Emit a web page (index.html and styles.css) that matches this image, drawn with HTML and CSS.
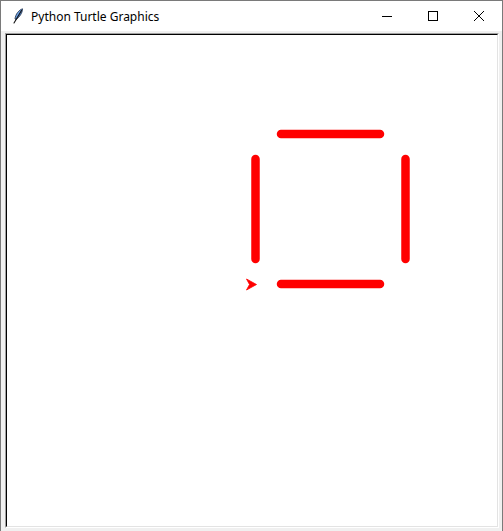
FILE: index.html
```html
<!DOCTYPE html>
<html lang="en">
<head>
  <meta charset="UTF-8">
  <meta name="viewport" content="width=device-width, initial-scale=1.0">
  <title>Python Turtle Graphics</title>
  <link rel="stylesheet" href="styles.css">
</head>
<body>

  <div class="window">
    <div class="titlebar">
      <svg class="app-icon" width="12" height="16" viewBox="0 0 12 16">
        <defs>
          <linearGradient id="feather" x1="0" y1="0" x2="1" y2="1">
            <stop offset="0" stop-color="#9cc8f4"/>
            <stop offset="1" stop-color="#2a68c8"/>
          </linearGradient>
        </defs>
        <path d="M10.5 0.8 C7 2 3.5 6 3 11 L4.2 11.6 C7.5 9 10.5 5 10.5 0.8 Z" fill="url(#feather)" stroke="#1b2a44" stroke-width="0.8"/>
        <path d="M9.5 2.5 L2 15" stroke="#111" stroke-width="1.1" stroke-linecap="round"/>
      </svg>
      <span class="title">Python Turtle Graphics</span>
      <div class="controls">
        <div class="ctl">
          <svg width="10" height="10" viewBox="0 0 10 10"><path d="M0 5.5 H10" stroke="#000" stroke-width="1"/></svg>
        </div>
        <div class="ctl">
          <svg width="10" height="10" viewBox="0 0 10 10"><rect x="0.5" y="0.5" width="9" height="9" fill="none" stroke="#000" stroke-width="1"/></svg>
        </div>
        <div class="ctl">
          <svg width="10" height="10" viewBox="0 0 10 10"><path d="M0 0 L10 10 M10 0 L0 10" stroke="#000" stroke-width="1"/></svg>
        </div>
      </div>
    </div>

    <div class="client">
      <div class="frame">
        <div class="canvas">
          <!-- turtle drawing, page coordinates -->
          <svg class="drawing" width="490" height="491" viewBox="7 35 490 491">
            <g stroke="#ff0000" stroke-width="8.5" stroke-linecap="round" fill="none">
              <line x1="281" y1="134" x2="380" y2="134"/>
              <line x1="255.5" y1="159" x2="255.5" y2="259"/>
              <line x1="405.5" y1="159" x2="405.5" y2="259"/>
              <line x1="281" y1="284" x2="380" y2="284"/>
            </g>
            <polygon points="256.5,284.5 246.5,279 249.5,284.5 246.5,290" fill="#ff0000" stroke="#ff0000" stroke-width="0.8"/>
          </svg>
        </div>
      </div>
    </div>
  </div>

</body>
</html>
```

FILE: styles.css
```css
html, body {
  margin: 0;
  padding: 0;
}
body {
  width: 503px;
  height: 531px;
  overflow: hidden;
  background: #f0f0f0;
  font-family: "Noto Sans", "Segoe UI", Arial, sans-serif;
}
.window {
  box-sizing: border-box;
  width: 503px;
  height: 531px;
  border: 1px solid #7a7a7a;
  border-bottom: none;
  background: #f0f0f0;
  display: flex;
  flex-direction: column;
}
.titlebar {
  height: 30px;
  background: #ffffff;
  display: flex;
  align-items: center;
  flex-shrink: 0;
}
.app-icon {
  margin-left: 11px;
  margin-right: 7px;
}
.title {
  font-size: 12px;
  color: #000;
  flex: 1;
}
.controls {
  display: flex;
  height: 30px;
}
.ctl {
  width: 46px;
  height: 30px;
  display: flex;
  align-items: center;
  justify-content: center;
}
.ctl svg {
  display: block;
}
.client {
  flex: 1;
  padding: 2px 2px 3px 4px;
  display: flex;
}
.frame {
  box-sizing: border-box;
  width: 494px;
  height: 495px;
  border-top: 1px solid #a0a0a0;
  border-left: 1px solid #a0a0a0;
  border-right: 1px solid #ffffff;
  border-bottom: 1px solid #ffffff;
}
.canvas {
  box-sizing: border-box;
  width: 492px;
  height: 493px;
  border-top: 1px solid #000;
  border-left: 1px solid #000;
  border-right: 1px solid #e3e3e3;
  border-bottom: 1px solid #e3e3e3;
  background: #ffffff;
  position: relative;
  overflow: hidden;
}
.drawing {
  position: absolute;
  left: 0;
  top: 0;
  display: block;
}
```
